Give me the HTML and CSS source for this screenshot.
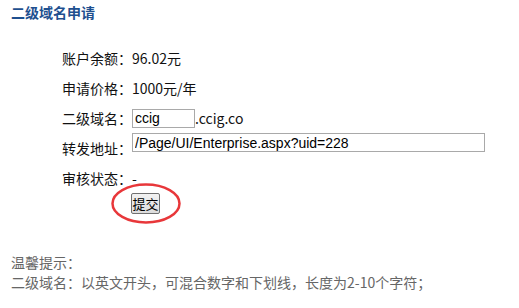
FILE: index.html
```html
<!DOCTYPE html>
<html lang="zh">
<head>
  <meta charset="UTF-8" />
  <title>二级域名申请</title>
  <link rel="stylesheet" href="styles.css">
</head>
<body>
  <h3 class="title">二级域名申请</h3>

  <div class="form">
    <div class="row">
      <span class="label">账户余额：</span><span>96.02元</span>
    </div>
    <div class="row">
      <span class="label">申请价格：</span><span>1000元/年</span>
    </div>
    <div class="row">
      <span class="label">二级域名：</span><input class="txt short" type="text" value="ccig" /><span class="suffix">.ccig.co</span>
    </div>
    <div class="row row-url">
      <span class="label">转发地址：</span><input class="txt long" type="text" value="/Page/UI/Enterprise.aspx?uid=228" />
    </div>
    <div class="row">
      <span class="label">审核状态：</span><span>-</span>
    </div>
    <div class="actions">
      <span class="btn-wrap">
        <button class="btn">提交</button>
        <svg class="mark" width="72" height="43" viewBox="0 0 72 43">
          <ellipse cx="36" cy="21.5" rx="33.5" ry="19" fill="none" stroke="#e8373a" stroke-width="2.5" />
        </svg>
      </span>
    </div>
  </div>

  <div class="tips">
    <p>温馨提示：</p>
    <p>二级域名：以英文开头，可混合数字和下划线，长度为2-10个字符；</p>
  </div>
</body>
</html>
```

FILE: styles.css
```css
body {
  margin: 0;
  background: #fff;
  font-family: "Noto Sans CJK SC", "Microsoft YaHei", sans-serif;
  font-size: 14px;
  color: #111;
}

.title {
  margin: 0;
  padding: 3px 11px;
  line-height: 18px;
  font-size: 14px;
  font-weight: bold;
  color: #1e4f8f;
}

.form {
  padding: 19px 0 0 62px;
}

.row {
  display: flex;
  align-items: center;
  height: 30px;
}

.label {
  width: 70px;
  flex: none;
}

.txt {
  box-sizing: border-box;
  height: 19px;
  margin: 0;
  padding: 0 2px;
  border: 1px solid #a9a9a9;
  font-family: "Liberation Sans", Arial, sans-serif;
  font-size: 14px;
  color: #000;
  outline: none;
}

.short {
  width: 63px;
}

.long {
  width: 353px;
}

.row-url {
  align-items: flex-end;
}

.row-url .label {
  line-height: 20px;
  margin-bottom: 5px;
}

.row-url .txt {
  align-self: flex-start;
}

.actions {
  padding-left: 69px;
}

.btn-wrap {
  position: relative;
  display: inline-block;
  vertical-align: top;
}

.btn {
  display: block;
  width: 29px;
  height: 21px;
  padding: 0;
  border: 1px solid #707070;
  border-radius: 2px;
  background: linear-gradient(#f2f2f2, #dcdcdc);
  font-family: "Noto Sans CJK SC", sans-serif;
  font-size: 13px;
  line-height: 19px;
  white-space: nowrap;
  color: #000;
}

.mark {
  position: absolute;
  left: -21px;
  top: -11px;
  pointer-events: none;
}

.tips {
  padding: 38px 0 0 11px;
  color: #666;
}

.tips p {
  margin: 0;
  line-height: 20px;
}
```
